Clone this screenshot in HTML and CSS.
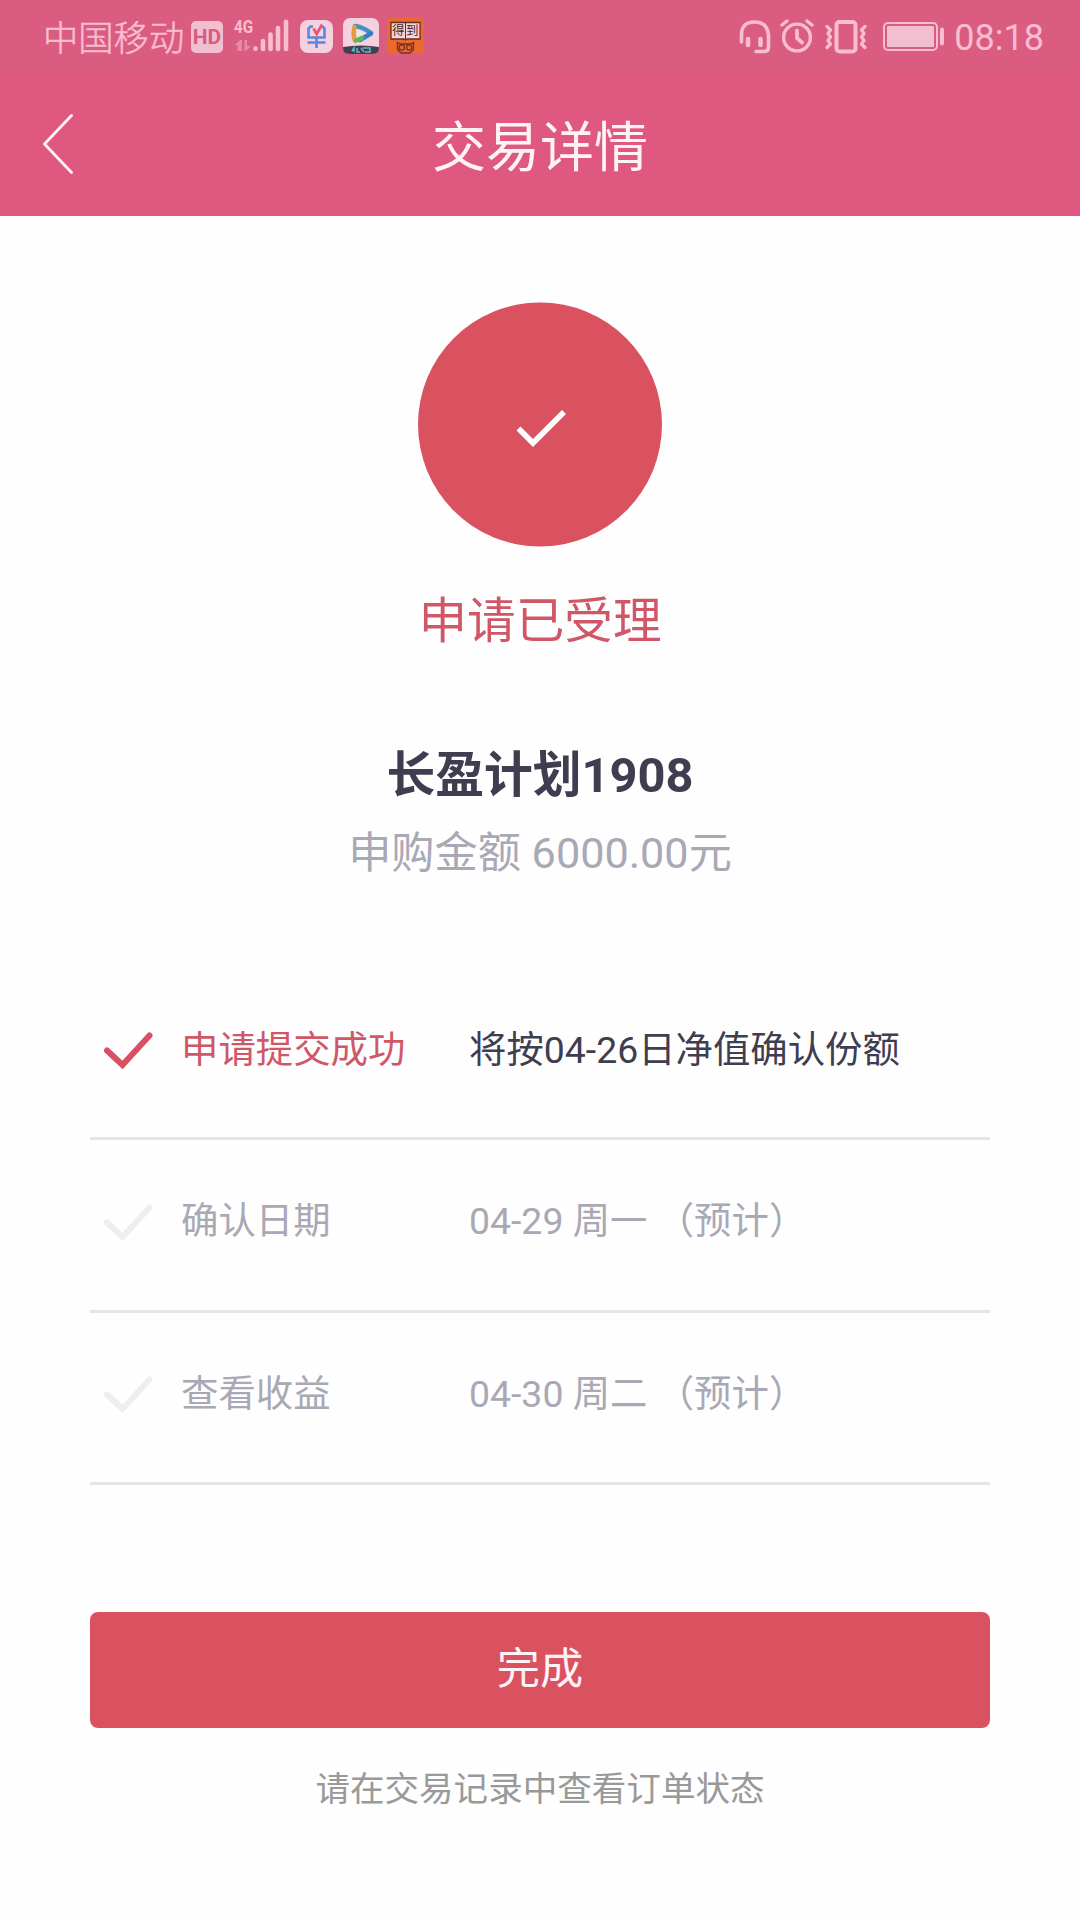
FILE: index.html
```html
<!DOCTYPE html>
<html lang="zh-CN">
<head>
<meta charset="utf-8">
<title>交易详情</title>
<link rel="stylesheet" href="styles.css">
</head>
<body>
<div class="status">
  <span class="carrier">中国移动</span>
  <span class="hd">HD</span>
  <span class="signal">
    <span class="net">4G</span>
    <svg width="54" height="34" viewBox="0 0 54 34">
      <g fill="#e78aa8"><path d="M0 26l5-5v11H2.500v-6z"/><path d="M5 21h2v11H5zM9.500 21H12v6h4.500L9.500 33z"/></g>
      <g stroke="#f9bdd1" stroke-width="4.600" stroke-linecap="round"><path d="M20.500 29.500v.2M28 22v8M35.500 15.500v14.500M43 9v21M51 2.800V30"/></g>
    </svg>
  </span>
  <svg class="app" width="33" height="33" viewBox="0 0 33 33">
    <rect width="33" height="33" rx="8" fill="#f5d0df"/>
    <path d="M13 6.500H10.500L8.500 8.500V17.500H24.500V8.500L22.500 6.500M7.500 22.500H25.500M16.500 17.500V28" fill="none" stroke="#5788e0" stroke-width="2.600"/>
    <path d="M13.500 8.500L16.700 14 22 4.500" fill="none" stroke="#ee526e" stroke-width="2.600"/>
  </svg>
  <svg class="video" width="36" height="36" viewBox="0 0 36 36">
    <rect width="36" height="36" rx="7" fill="#f5d0df"/>
    <path d="M12 8Q20 9 28 15" fill="none" stroke="#448fc4" stroke-width="4.500" stroke-linecap="round"/>
    <path d="M28 15.500L17 22" fill="none" stroke="#357fca" stroke-width="4.500" stroke-linecap="round"/>
    <path d="M11.500 9Q9.500 16 12 22.500" fill="none" stroke="#e39b46" stroke-width="4.500" stroke-linecap="round"/>
    <path d="M13 22.500L19 20" fill="none" stroke="#62b45b" stroke-width="4.500" stroke-linecap="round"/>
    <path d="M14 11.500l8 4-8 4z" fill="#e2eddb"/>
    <path d="M0 29q18-3 36 0v1q0 6-7 6H7q-7 0-7-6z" fill="#424052"/>
    <path d="M9 33l2-3v4M14 30v4h3M18 30l3 4M20 30h7v4h-5" fill="none" stroke="#55bfc5" stroke-width="1.500"/>
  </svg>
  <span class="book">
    <svg width="37" height="36" viewBox="0 0 37 36">
      <rect width="37" height="36" rx="4" fill="#ec692d"/>
      <path d="M4 4.500h29v16.500H20l-1.500 1-1.500-1H4z" fill="#f6d3d9" stroke="#622b2c" stroke-width="1.300"/>
      <path d="M18.500 4.500v17" stroke="#622b2c"/>
      <g fill="none" stroke="#733029" stroke-width="1.300"><path d="M10.500 24.500l3 1.500h10l3-1.500v7l-3.500 3.500h-9l-3.500-3.500z"/><circle cx="14.800" cy="29.500" r="2.600"/><circle cx="22.200" cy="29.500" r="2.600"/></g>
    </svg>
    <span class="booktext">得到</span>
  </span>
  <span class="grow"></span>
  <svg class="headset" width="32" height="34" viewBox="0 0 32 34">
    <g fill="none" stroke="#f9bdd1" stroke-width="3.600" stroke-linecap="round"><path d="M2.500 22V15Q2.500 2 15.500 2T29.500 15V27Q29.500 31.500 25 31.500H17"/><path d="M9 19v6M21.500 19v6" stroke-width="4.600"/></g>
  </svg>
  <svg class="alarm" width="34" height="34" viewBox="0 0 34 34">
    <g fill="none" stroke="#f9bdd1" stroke-width="3.400" stroke-linecap="round" stroke-linejoin="round"><circle cx="17" cy="18.500" r="13.400"/><path d="M17 11.500V19l5 4.500" stroke-width="3.800"/><path d="M2 6l5-4M27 2l5 4"/></g>
  </svg>
  <svg class="vibrate" width="42" height="34" viewBox="0 0 42 34">
    <g fill="none" stroke="#f9bdd1" stroke-width="3.200" stroke-linecap="round" stroke-linejoin="round"><rect x="11.500" y="2" width="19" height="29.500" rx="3" stroke-width="4"/><path d="M2 6.500l3.500 3.500-2.500 3.500 2.500 3.500-2.500 3.500 2.500 3.500-3.500 3.500M40 6.500l-3.500 3.500 2.500 3.500-2.500 3.500 2.500 3.500-2.500 3.500 3.500 3.500"/></g>
  </svg>
  <svg class="battery" width="62" height="30" viewBox="0 0 62 30">
    <rect x="1" y="1" width="53" height="27" rx="4" fill="none" stroke="#f9bdd1" stroke-width="2"/>
    <rect x="4" y="4" width="47" height="21" rx="1" fill="#f1bfcf"/>
    <path d="M59 7.500v14" stroke="#f9bdd1" stroke-width="4" stroke-linecap="round"/>
  </svg>
  <span class="time">08:18</span>
</div>
<header class="header">
  <svg class="back" width="32" height="60" viewBox="0 0 32 60"><path d="M29.500 1.500L2.500 30l27 28.500" fill="none" stroke="#fff3f8" stroke-width="2.800" stroke-linecap="round" stroke-linejoin="round"/></svg>
  <h1 class="title">交易详情</h1>
</header>
<main class="main">
  <svg class="badge" width="244" height="245" viewBox="0 0 244 245"><circle cx="122" cy="122.500" r="122" fill="#da5160"/><path d="M100.500 126.500l14.500 14.500L146 110" fill="none" stroke="#fff" stroke-width="5.600"/></svg>
  <p class="accepted">申请已受理</p>
  <h2 class="product">长盈计划1908</h2>
  <p class="amount">申购金额 6000.00元</p>
  <ul class="steps">
    <li class="step done">
      <svg class="tick" width="49" height="37" viewBox="0 0 49 37"><path d="M3 18.500L18.500 33 45.500 3.500" /></svg>
      <span class="label">申请提交成功</span><span class="value">将按04-26日净值确认份额</span>
    </li>
    <li class="step">
      <svg class="tick" width="49" height="37" viewBox="0 0 49 37"><path d="M3 18.500L18.500 33 45.500 3.500" /></svg>
      <span class="label">确认日期</span><span class="value">04-29 周一 （预计）</span>
    </li>
    <li class="step">
      <svg class="tick" width="49" height="37" viewBox="0 0 49 37"><path d="M3 18.500L18.500 33 45.500 3.500" /></svg>
      <span class="label">查看收益</span><span class="value">04-30 周二 （预计）</span>
    </li>
  </ul>
  <button class="finish">完成</button>
  <p class="hint">请在交易记录中查看订单状态</p>
</main>
</body>
</html>
```
FILE: styles.css
```css
* { box-sizing: border-box; }
body {
  margin: 0;
  width: 1080px;
  height: 1920px;
  overflow: hidden;
  background: #fefefe;
  font-family: Roboto, "Noto Sans CJK SC", sans-serif;
}
h1, h2, p, ul { margin: 0; padding: 0; font-weight: 400; }
svg { display: block; flex: none; }

.status {
  display: flex;
  align-items: flex-start;
  height: 72px;
  padding: 0 36px 0 43px;
  background: #da5c80;
  color: #f9bdd1;
}
.carrier {
  width: 148px;
  margin-top: 14px;
  font-size: 35.3px;
  font-weight: 300;
  line-height: 50px;
  white-space: nowrap;
  -webkit-text-stroke: .5px #f9bdd1;
}
.hd {
  width: 32px;
  height: 32px;
  margin-top: 21px;
  border-radius: 5px;
  background: #f1bfcf;
  color: #da5c80;
  font-size: 21px;
  font-weight: 700;
  line-height: 33px;
  text-align: center;
}
.signal { position: relative; margin: 19px 0 0 12px; }
.net { position: absolute; left: -1px; top: -1px; font: 700 19px/18px Roboto, sans-serif; transform: scaleX(.8); transform-origin: left; }
.app { margin: 20px 0 0 11px; }
.video { margin: 18px 0 0 10px; }
.book { position: relative; margin: 18px 0 0 8px; }
.booktext {
  position: absolute;
  left: 5px;
  top: 5px;
  width: 28px;
  color: #3f1f25;
  font-size: 12.5px;
  font-weight: 400;
  line-height: 16px;
  letter-spacing: 1.5px;
  white-space: nowrap;
}
.grow { flex: 1; }
.headset { margin-top: 20px; }
.alarm { margin: 19px 0 0 9px; }
.vibrate { margin: 20px 0 0 11px; }
.battery { margin: 22px 0 0 16px; }
.time { margin: 17px 0 0 9px; font-size: 36px; line-height: 42px; }

.header {
  display: flex;
  align-items: center;
  height: 144px;
  padding: 0 42px;
  background: #df587f;
}
.title { flex: 1; padding: 9px 32px 0 0; text-align: center; color: #fff3f8; font-size: 54px; line-height: 80px; }

.main { display: flex; flex-direction: column; align-items: center; padding: 86px 90px 0; }
.accepted { margin-top: 39px; color: #cf5767; font-size: 48.6px; line-height: 72px; }
.product { margin-top: 82px; color: #3f3d50; font-size: 48.8px; font-weight: 700; line-height: 72px; }
.amount { margin-top: 10px; color: #a9a8b5; font-size: 43.2px; line-height: 64px; }

.steps { width: 100%; margin-top: 82px; list-style: none; }
.step {
  display: flex;
  align-items: center;
  height: 172px;
  padding: 0 14px 8px;
  border-bottom: 3px solid #e4e4ea;
  color: #a9a8b5;
  font-size: 37.4px;
  line-height: 56px;
  white-space: nowrap;
}
.step:nth-child(2) { height: 173px; }
.tick { margin-top: 2px; fill: none; stroke: #eee; stroke-width: 6; stroke-linecap: round; stroke-linejoin: miter; }
.label { width: 288px; margin-left: 28px; }
.done { padding-bottom: 6px; color: #3f3d50; }
.done .label { color: #cf5767; }
.done .tick { stroke: #d95063; }

.finish {
  width: 100%;
  height: 116px;
  margin-top: 127px;
  border: 0;
  border-radius: 8px;
  background: #da5160;
  color: #fff3f8;
  font: 43.2px/64px Roboto, "Noto Sans CJK SC", sans-serif;
}
.hint { margin-top: 35px; color: #999; font-size: 34.56px; line-height: 52px; }
```
